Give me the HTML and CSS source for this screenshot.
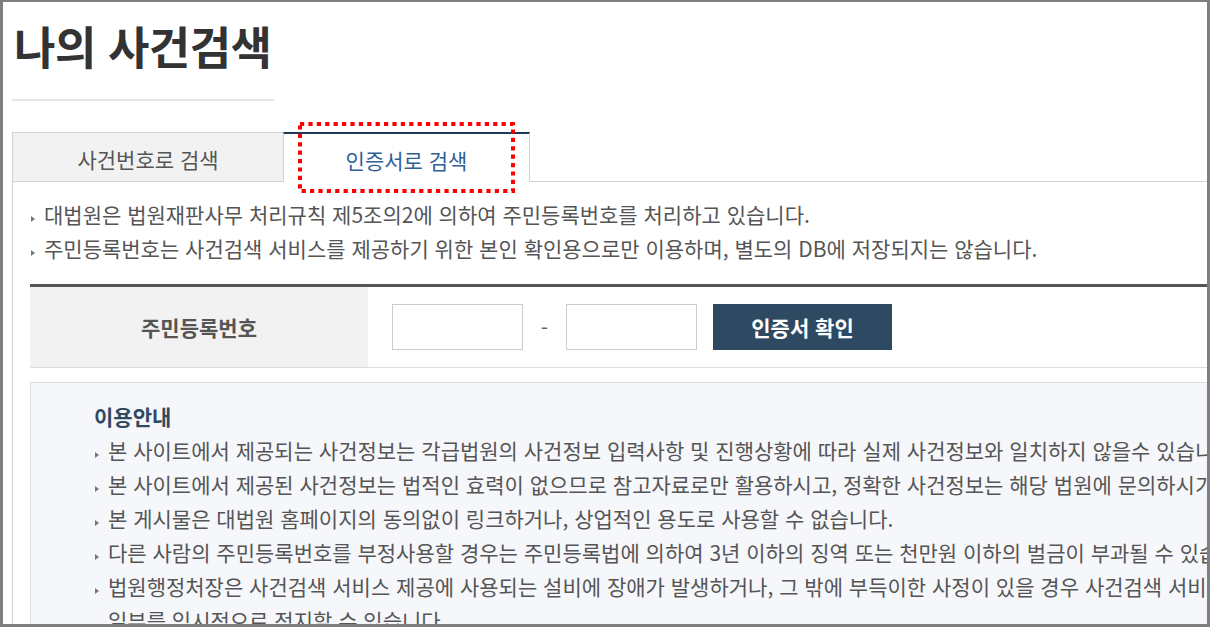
FILE: index.html
```html
<!doctype html>
<html lang="ko">
  <head>
    <meta charset="UTF-8" />
    <meta name="viewport" content="width=device-width, initial-scale=1.0" />
    <title>나의 사건검색</title>
    <link rel="stylesheet" href="styles.css">
  </head>
  <body>
    <div class="frame">
      <div class="page">
        <!-- Page title -->
        <div class="title-wrap">
          <h1 class="page-title">나의 사건검색</h1>
        </div>

        <!-- Search tabs -->
        <div class="tabs">
          <a class="tab" href="#">사건번호로 검색</a>
          <a class="tab active" href="#">인증서로 검색</a>
        </div>

        <div class="tab-body">
          <ul class="notice">
            <li>대법원은 법원재판사무 처리규칙 제5조의2에 의하여 주민등록번호를 처리하고 있습니다.</li>
            <li>주민등록번호는 사건검색 서비스를 제공하기 위한 본인 확인용으로만 이용하며, 별도의 DB에 저장되지는 않습니다.</li>
          </ul>

          <!-- ID number form -->
          <div class="id-form">
            <div class="id-label">주민등록번호</div>
            <div class="id-fields">
              <input type="text" class="id-input" maxlength="6" />
              <span class="dash">-</span>
              <input type="password" class="id-input" maxlength="7" />
              <button type="button" class="btn-cert">인증서 확인</button>
            </div>
          </div>

          <!-- Usage guide -->
          <div class="guide">
            <h3>이용안내</h3>
            <ul>
              <li>본 사이트에서 제공되는 사건정보는 각급법원의 사건정보 입력사항 및 진행상황에 따라 실제 사건정보와 일치하지 않을수 있습니다.</li>
              <li>본 사이트에서 제공된 사건정보는 법적인 효력이 없으므로 참고자료로만 활용하시고, 정확한 사건정보는 해당 법원에 문의하시기 바랍니다.</li>
              <li>본 게시물은 대법원 홈페이지의 동의없이 링크하거나, 상업적인 용도로 사용할 수 없습니다.</li>
              <li>다른 사람의 주민등록번호를 부정사용할 경우는 주민등록법에 의하여 3년 이하의 징역 또는 천만원 이하의 벌금이 부과될 수 있습니다.</li>
              <li>법원행정처장은 사건검색 서비스 제공에 사용되는 설비에 장애가 발생하거나, 그 밖에 부득이한 사정이 있을 경우 사건검색 서비스의 전부 또는<br>일부를 임시적으로 정지할 수 있습니다.</li>
            </ul>
          </div>
        </div>
      </div>

      <!-- Red dotted highlight around the active tab -->
      <svg class="highlight" width="217" height="71" viewBox="0 0 217 71">
        <rect x="2" y="2" width="213" height="67" fill="none" stroke="#ff0000" stroke-width="4" stroke-dasharray="4.2 4.2" />
      </svg>
    </div>
  </body>
</html>
```

FILE: styles.css
```css
/* Page Styling */
body {
  margin: 0;
  font-family: "Noto Sans CJK KR", "Noto Sans", sans-serif;
  color: #555;
  background: #fff;
}

/* Grey picture frame */
.frame {
  position: relative;
  width: 1210px;
  height: 627px;
  box-sizing: border-box;
  border: 3px solid #7f7f7f;
  border-top-width: 2px;
  overflow: hidden;
}

.page {
  width: 1400px;
  padding: 16px 0 0 9px;
}

.title-wrap {
  width: 262px;
  padding-bottom: 25px;
  border-bottom: 2px solid #e6e6e6;
}

.page-title {
  margin: 0 0 0 2px;
  font-size: 45px;
  line-height: 56px;
  font-weight: 700;
  letter-spacing: -0.5px;
  white-space: nowrap;
  color: #333;
}

/* Tabs */
.tabs {
  display: flex;
  margin-top: 31px;
  height: 50px;
}

.tab {
  display: flex;
  align-items: center;
  justify-content: center;
  box-sizing: border-box;
  padding-top: 3px;
  font-size: 21px;
  text-decoration: none;
  color: #555;
}

.tab:first-child {
  width: 271px;
  background-color: #f2f2f2;
  border: 1px solid #d2d2d2;
  border-right: none;
}

.tab.active {
  width: 247px;
  background-color: #fff;
  color: #2f5f96;
  border-top: 2px solid #1d3b58;
  border-left: 1px solid #d2d2d2;
  border-right: 1px solid #d2d2d2;
}

.tabs::after {
  content: "";
  flex: 1;
  border-bottom: 1px solid #d2d2d2;
}

.tab-body {
  border-left: 1px solid #d2d2d2;
  padding: 15px 0 0 17px;
}

/* Bullet lists */
.notice,
.guide ul {
  list-style: none;
  margin: 0;
  padding: 0;
}

.notice li,
.guide li {
  position: relative;
  padding-left: 14px;
  font-size: 21px;
  line-height: 34px;
  white-space: nowrap;
  color: #555;
}

.notice li::before,
.guide li::before {
  content: "";
  position: absolute;
  left: 1px;
  top: 19px;
  border-left: 4px solid #777;
  border-top: 3px solid transparent;
  border-bottom: 3px solid transparent;
}

.notice {
  margin-bottom: 19px;
}

/* ID number form */
.id-form {
  display: flex;
  border-top: 3px solid #555;
  border-bottom: 1px solid #ddd;
  height: 80px;
}

.id-label {
  width: 338px;
  display: flex;
  align-items: center;
  justify-content: center;
  background-color: #f2f2f2;
  font-size: 21px;
  font-weight: 700;
  color: #555;
}

.id-fields {
  display: flex;
  align-items: center;
  padding-left: 24px;
}

.id-input {
  width: 131px;
  height: 46px;
  box-sizing: border-box;
  border: 1px solid #ccc;
  background: #fff;
}

.dash {
  width: 43px;
  text-align: center;
  font-size: 21px;
  color: #666;
}

.btn-cert {
  margin-left: 16px;
  width: 179px;
  height: 46px;
  border: none;
  background-color: #2d4a62;
  color: #fff;
  font-family: "Noto Sans CJK KR", sans-serif;
  font-size: 21px;
  font-weight: 700;
  cursor: pointer;
}

/* Usage guide box */
.guide {
  margin-top: 14px;
  border: 1px solid #ddd;
  background-color: #f6f7fb;
  padding: 16px 0 0 63px;
}

.guide h3 {
  margin: 0;
  font-size: 21px;
  line-height: 34px;
  font-weight: 700;
  color: #2d4a62;
}

/* Annotation overlay */
.highlight {
  position: absolute;
  left: 295px;
  top: 120px;
}
```
